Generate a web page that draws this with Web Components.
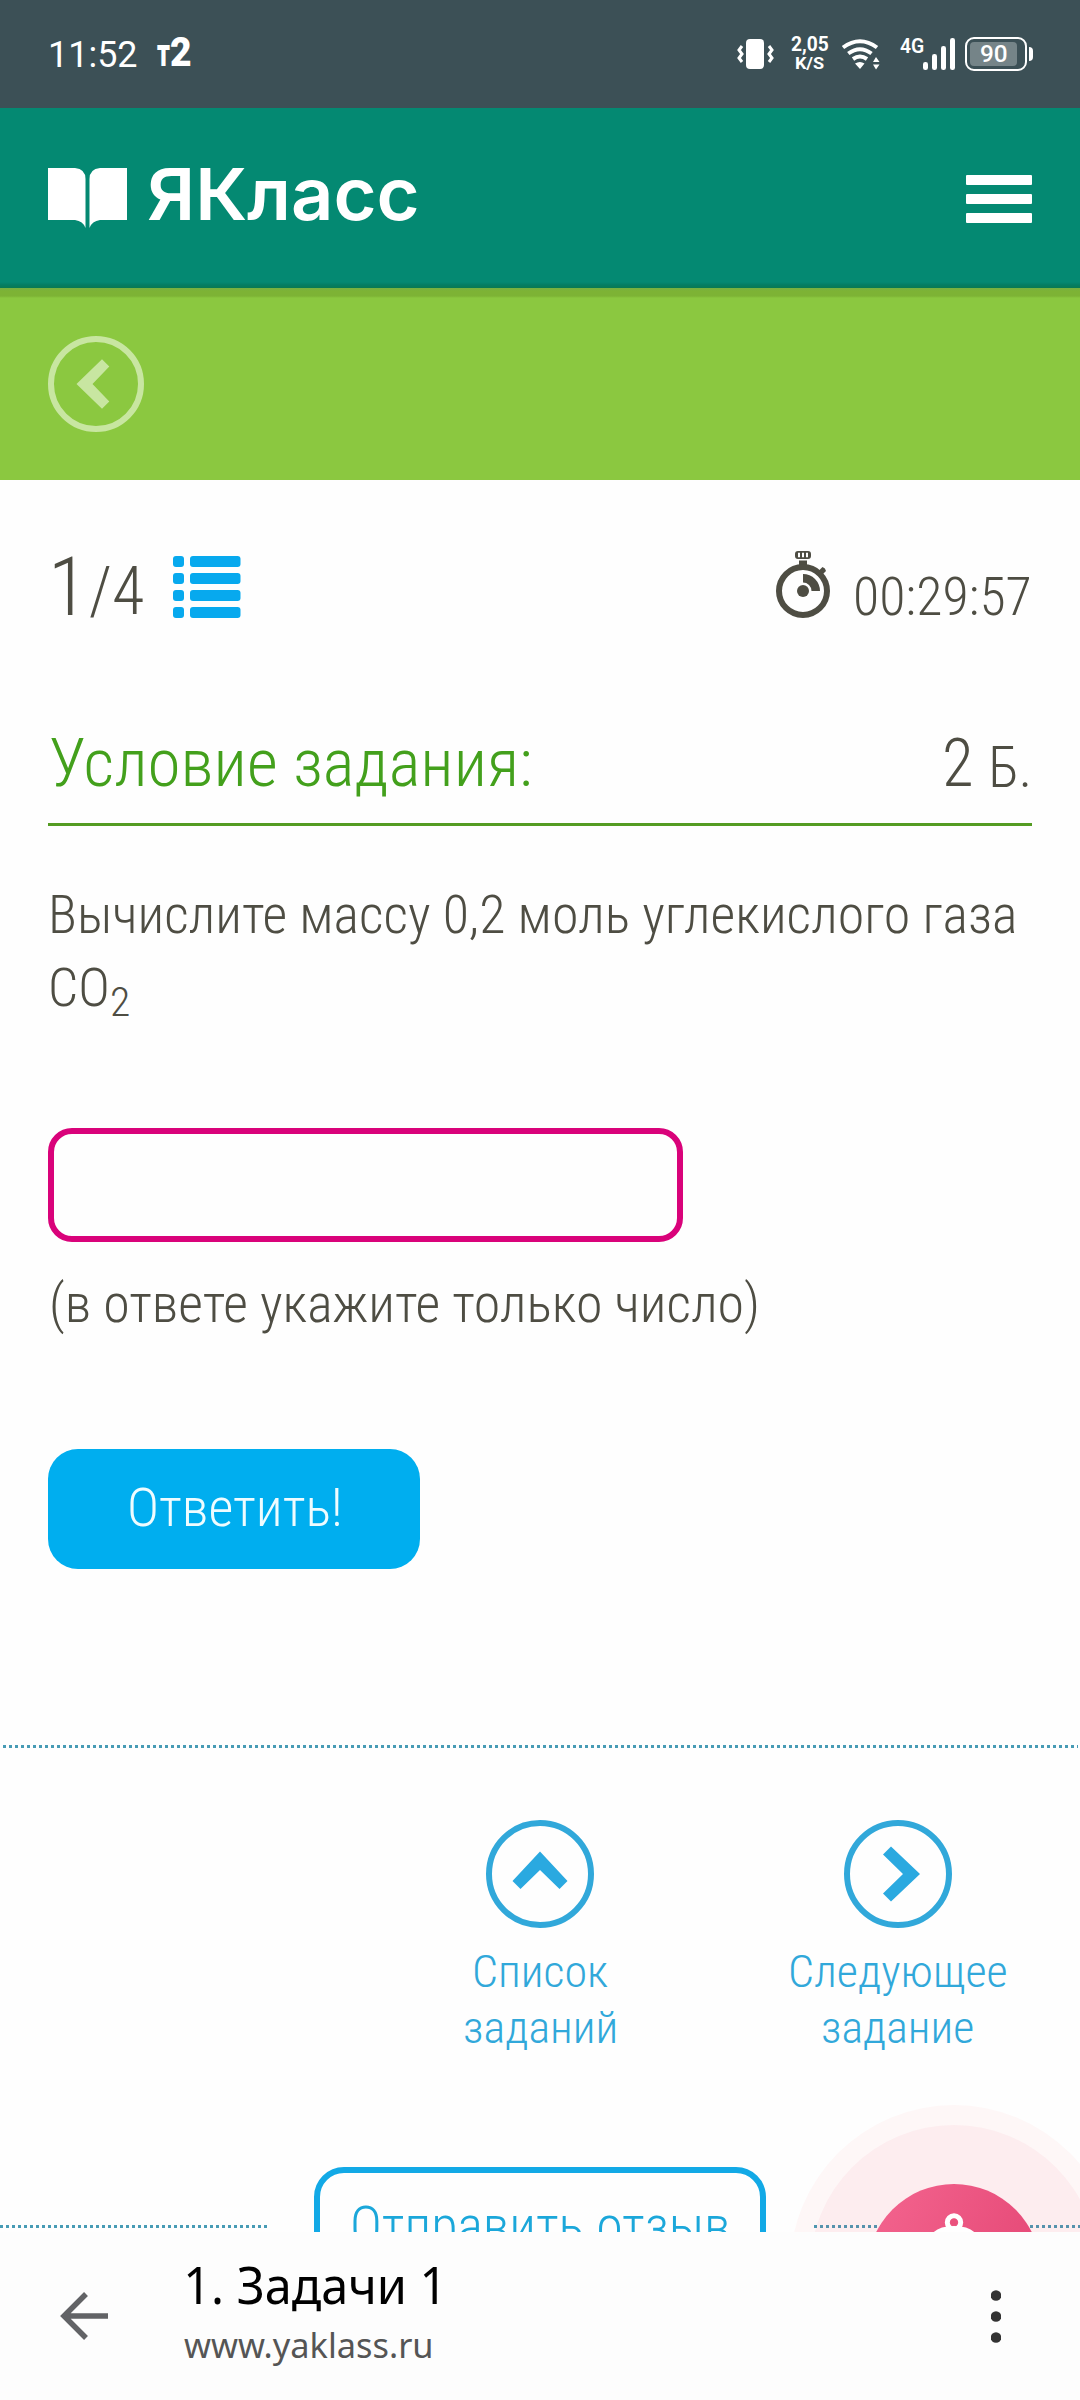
<!DOCTYPE html>
<html lang="ru">
<head>
<meta charset="utf-8">
<title>ЯКласс</title>
<style>
html,body{margin:0;padding:0;background:#fefefe}
body{width:1080px;height:2400px;overflow:hidden}
</style>
</head>
<body>
<yk-app></yk-app>
<script>
const CONDENSED = '"Roboto Condensed", Roboto, "Liberation Sans", sans-serif';
const pen = document.createElement('canvas').getContext('2d');

function define(name, css, html) {
  customElements.define(name, class extends HTMLElement {
    constructor() {
      super();
      this.attachShadow({ mode: 'open' }).innerHTML =
        `<style>:host{display:block;box-sizing:border-box}svg{display:block}${css}</style>${html}`;
    }
  });
}

/* One line of text whose box is its ink: w wide, cap tall, baseline on the bottom edge. */
customElements.define('fit-text', class extends HTMLElement {
  constructor() {
    super();
    this.attachShadow({ mode: 'open' }).innerHTML =
      '<style>:host{display:block;flex:none}span{display:block;width:max-content;white-space:pre;transform-origin:0 0}</style><span><slot></slot></span>';
  }
  connectedCallback() {
    const num = (k, d) => parseFloat(this.getAttribute(k) || d);
    const size = num('size', 54), w = num('w', 100), cap = num('cap', size * 0.711);
    const weight = this.getAttribute('weight') || '300';
    const own = this.getAttribute('font');
    const font = `${weight} ${own ? '' : 'condensed '}${size}px ${own || CONDENSED}`;
    pen.font = font;
    const m = pen.measureText(this.textContent);
    const k = w / (m.actualBoundingBoxRight + m.actualBoundingBoxLeft);
    const base = cap / 2 + (m.fontBoundingBoxAscent - m.fontBoundingBoxDescent) / 2;
    this.style.width = w + 'px';
    this.style.height = cap + 'px';
    const s = this.shadowRoot.querySelector('span').style;
    s.font = font;
    s.lineHeight = cap + 'px';
    s.transform = `translate(${m.actualBoundingBoxLeft * k}px,${cap - base}px) scaleX(${k})`;
  }
});

define('status-bar', `
:host{height:108px;background:#3c5056;color:#fff;display:flex;align-items:flex-start;padding-left:51px}
.time{margin-top:42px}.op{display:flex;margin-left:20px}.op .t{margin-top:46px}.op .n{margin:38px 0 0 1px}
.vib{margin:39px 0 0 546px}.net{margin:37px 0 0 17px;display:flex;flex-direction:column;align-items:center;gap:6px}
.wifi{margin:38px 0 0 13px}.g{margin:39px 0 0 20px}.sig{margin:38px 0 0 -1px}
.bat{margin:37px 0 0 9px;width:62px;height:34px;box-sizing:border-box;border:2.5px solid #fff;border-radius:9px;padding:3px;display:flex}
.fill{width:47px;background:#758488;border-radius:4px;display:flex;justify-content:center;align-items:center}
.tip{width:4px;height:14px;background:#fff;border-radius:0 5px 5px 0;margin:47px 0 0 2px}
`, `
<fit-text class="time" size="36.5" weight="400" w="86" font="Roboto, sans-serif">11:52</fit-text>
<div class="op"><fit-text class="t" size="38" cap="20.5" weight="900" w="13" font="Roboto, sans-serif">т</fit-text><fit-text class="n" size="41" cap="28.5" weight="900" w="20" font="Roboto, sans-serif">2</fit-text></div>
<svg class="vib" width="37" height="30" viewBox="0 0 37 30"><rect x="9" y="0" width="18" height="30" rx="4" fill="#fff"/><path d="M5 7l-3 4 3 4-3 4 3 4M32 7l3 4-3 4 3 4-3 4" fill="none" stroke="#fff" stroke-width="3"/></svg>
<div class="net"><fit-text size="20.5" weight="700" w="37" font="Roboto, sans-serif">2,05</fit-text><fit-text size="16.5" weight="700" w="28" font="Roboto, sans-serif">K/S</fit-text></div>
<svg class="wifi" width="39" height="33" viewBox="0 0 39 33"><path d="M2 9.5Q19 -3 36 9.5M7.300 15.500Q19 7 30.500 15.500M12 21Q19 16 26 21" fill="none" stroke="#fff" stroke-width="4"/><path d="M14 25.500Q19 22.500 23.500 25.500L19 31ZM32 24l3-5 3.500 5zM32 26.500h6.500l-3.500 5z" fill="#fff"/></svg>
<fit-text class="g" size="21" weight="600" w="24" font="Roboto, sans-serif">4G</fit-text>
<svg class="sig" width="33" height="32" viewBox="0 0 33 32"><g fill="#fff"><rect y="24" width="5" height="8" rx="2.300"/><rect x="9" y="16" width="5" height="16" rx="2.300"/><rect x="18" y="8" width="5" height="24" rx="2.300"/><rect x="27" width="5" height="32" rx="2.300"/></g></svg>
<div class="bat"><div class="fill"><fit-text size="24" weight="500" w="26" font="Roboto, sans-serif">90</fit-text></div></div><div class="tip"></div>
`);

define('site-header', `
:host{height:180px;color:#fff;background:linear-gradient(#048972 0 174px,#047d62 177px,#087a52 180px);display:flex;justify-content:space-between;padding:60px 48px 0}
.logo{display:flex;gap:21px;align-items:flex-start}.menu{margin-top:7px}
`, `
<div class="logo"><svg width="79" height="61" viewBox="0 0 79 61"><path fill="#fff" d="M0 0H27Q37.500 1 37.500 11V60Q35 53 27 52H0ZM79 0H52Q41.500 1 41.500 11V60Q44 53 52 52H79Z"/></svg>
<fit-text size="72" cap="52" weight="600" w="268.500" font="Inter, sans-serif">ЯКласс</fit-text></div>
<svg class="menu" width="66" height="48" viewBox="0 0 66 48"><g fill="#fff"><rect width="66" height="10" rx="1"/><rect y="19" width="66" height="10" rx="1"/><rect y="38" width="66" height="10" rx="1"/></g></svg>
`);

define('back-strip', `
:host{height:192px;background:linear-gradient(#76b043 0,#7db335 3px 8px,#8bc840 10px);padding:48px}
`, `<svg width="96" height="96" viewBox="0 0 96 96"><circle cx="48" cy="48" r="45" fill="none" stroke="#c8e6a1" stroke-width="6"/><path d="M28.500 48L54 23.300 61.300 30.500 44.500 48 61.300 65.500 54 72.700Z" fill="#c8e6a1"/></svg>`);

define('task-progress', `
:host{display:flex;justify-content:space-between;height:138px}
.l,.r{display:flex;align-items:flex-start}
.one{margin:0 0 0 6px}.sl{margin:10px 0 0 17px}.four{margin:10px 0 0 4px}.list{margin:-1px 0 0 29.5px}
.r{margin-top:-6px}.r fit-text{margin:26px 2.5px 0 26px}
`, `
<div class="l"><fit-text class="one" size="82" w="19">1</fit-text><fit-text class="sl" size="67.500" w="20">/</fit-text><fit-text class="four" size="67.500" w="29.500">4</fit-text>
<svg class="list" width="68" height="62" viewBox="0 0 68 62"><g fill="#07a9ee"><rect width="11" height="11" rx="3"/><rect x="17" width="50.500" height="11" rx="3"/><rect y="17" width="11" height="11" rx="3"/><rect x="17" y="17" width="50.500" height="11" rx="3"/><rect y="34" width="11" height="11" rx="3"/><rect x="17" y="34" width="50.500" height="11" rx="3"/><rect y="51" width="11" height="11" rx="3"/><rect x="17" y="51" width="50.500" height="11" rx="3"/></g></svg></div>
<div class="r"><svg width="54" height="67" viewBox="0 0 54 67"><g fill="#4e4d43"><path fill-rule="evenodd" d="M22 0h10q3 0 3 3v2q0 3-3 3H22q-3 0-3-3V3q0-3 3-3zM22 1.700v4.600h2V1.700zM26 1.700v4.600h2V1.700zM30 1.700v4.600h2V1.700z"/><path d="M23 9.500h8v6h-8zM42.500 20l4-4q3 1 3.500 4l-4 4z"/><circle cx="27" cy="40" r="6"/><path d="M27 23A17 17 0 0 1 44 40H35.500A8.500 8.500 0 0 0 27 31.500Z"/></g><circle cx="27" cy="40" r="24" fill="none" stroke="#4e4d43" stroke-width="6"/></svg>
<fit-text size="54" w="173.500">00:29:57</fit-text></div>
`);

define('task-heading', `
:host{display:flex;justify-content:space-between;height:131px;border-bottom:3px solid #549c22;padding:44px 5px 0 3px}
.t{color:#43a01c}.p{display:flex;gap:20.5px}.p .b{margin-top:6.5px}
`, `<fit-text class="t" size="67.500" w="479">Условие задания:</fit-text>
<div class="p"><fit-text size="67.500" w="26">2</fit-text><fit-text class="b" size="58" w="35.500">Б.</fit-text></div>`);

define('task-body', `
:host{padding:69px 0 0 0;display:flex;flex-direction:column;align-items:flex-start}
.a{margin-left:4px}.f{display:flex;margin:35px 0 0 3px;align-items:flex-start}.f .s{margin:20px 0 0 5px}
.in{box-sizing:border-box;width:635px;height:114px;border:6px solid #d9027a;border-radius:24px;margin-top:111px}
.n{margin:42px 0 0 4px}
.btn{width:372px;height:120px;border-radius:30px;background:#00aeef;color:#effcff;margin-top:126px;display:flex;justify-content:center;padding-top:39px;box-sizing:border-box}
`, `
<fit-text class="a" size="54" w="963">Вычислите массу 0,2 моль углекислого газа</fit-text>
<div class="f"><fit-text size="54" w="56">CO</fit-text><fit-text class="s" size="40.500" w="16.500">2</fit-text></div>
<div class="in"></div>
<fit-text class="n" size="54" w="705">(в ответе укажите только число)</fit-text>
<div class="btn"><fit-text size="54" w="209">Ответить!</fit-text></div>
`);

define('dotted-line', `
:host{height:3px;background:repeating-linear-gradient(90deg,#479bb5 0 3px,transparent 3px 6px)}
`, ``);

define('nav-link', `
:host{display:flex;flex-direction:column;align-items:center;color:#31a8da;width:216px}
::slotted(svg){display:block;margin-bottom:27.5px}
::slotted(fit-text){margin-bottom:25px}
`, `<slot></slot>`);

define('feedback-button', `
:host{width:452px;height:120px;border:6.5px solid #12a9e6;border-radius:30px;color:#1ba7da;display:flex;justify-content:center;padding-top:33px}
`, `<fit-text size="54" w="375">Отправить отзыв</fit-text>`);

define('page-footer', `
.nav{display:flex;gap:142px;padding:72px 0 0 432px;height:347px;box-sizing:border-box}
.row{display:grid;height:137px;position:relative;overflow:hidden;grid-template-columns:314px 452px 314px}
feedback-button{margin-top:72px}
.first{margin-left:1.5px}
.l{width:267px;margin-top:130px}.r{width:266px;margin:130px 0 0 48px}
.bell{position:absolute;left:789px;top:10px}
`, `
<dotted-line style="margin:0 0 0 3px;width:1075px"></dotted-line>
<div class="nav">
<nav-link><svg width="108" height="108" viewBox="0 0 108 108"><circle cx="54" cy="54" r="51" fill="none" stroke="#31a8da" stroke-width="6"/><path fill="#2aa9e0" d="M54 31.500L81.500 61 73.500 69 54 50 34.500 69 26.500 61Z"/></svg><fit-text class="first" size="45" w="132.500">Список</fit-text><fit-text size="45" w="150">заданий</fit-text></nav-link>
<nav-link><svg width="108" height="108" viewBox="0 0 108 108"><circle cx="54" cy="54" r="51" fill="none" stroke="#31a8da" stroke-width="6"/><path fill="#2aa9e0" d="M76 54L47 26.500 39 34.500 59 54 39 73.500 47 81.500Z"/></svg><fit-text class="first" size="45" w="215">Следующее</fit-text><fit-text size="45" w="149.500">задание</fit-text></nav-link>
</div>
<div class="row"><dotted-line class="l"></dotted-line><feedback-button></feedback-button><dotted-line class="r"></dotted-line>
<svg class="bell" width="291" height="127" viewBox="789 2105 291 127"><defs><linearGradient id="p" x1="0" x2="1" y1="0" y2=".5"><stop stop-color="#f4658f"/><stop offset="1" stop-color="#e54876"/></linearGradient></defs>
<circle cx="954" cy="2269" r="164" fill="#f44336" fill-opacity=".035"/><circle cx="954" cy="2269" r="144" fill="#f0406a" fill-opacity=".05"/>
<circle cx="954" cy="2271" r="87" fill="url(#p)"/><circle cx="954" cy="2222.500" r="6.700" fill="none" stroke="#fff" stroke-width="5"/><path d="M932 2234Q938 2226 954 2226T976 2234Z" fill="#fff"/><circle cx="954" cy="2222" r="3.300" fill="#ea517d"/></svg></div>
`);

define('browser-bar', `
:host{height:168px;background:#fdfdfd;display:flex;align-items:flex-start;padding:35px 79px 0 60px}
.ar{margin-top:24px}.t{margin-left:76px;flex:1}.u{color:#555;margin:29px 0 0 0}.t fit-text:first-child{color:#000;margin-left:3px}
.m{margin-top:23px}
`, `
<svg class="ar" width="48" height="50" viewBox="0 0 48 50"><path d="M48 25H5M26 3L4 25 26 47" fill="none" stroke="#626366" stroke-width="5.500"/></svg>
<div class="t"><fit-text size="51.500" cap="37" weight="400" w="250.500" font="'Noto Sans', sans-serif">1. Задачи 1</fit-text><fit-text class="u" size="35" cap="25" weight="400" w="247" font="'Noto Sans', sans-serif">www.yaklass.ru</fit-text></div>
<svg class="m" width="10" height="53" viewBox="0 0 10 53"><g fill="#333"><circle cx="5" cy="5.500" r="5.300"/><circle cx="5" cy="26.500" r="5.300"/><circle cx="5" cy="47.500" r="5.300"/></g></svg>
`);

define('yk-app', `
:host{width:1080px;height:2400px;background:#fefefe;color:#4e4d43;display:flex;flex-direction:column;overflow:hidden}
main{padding:77px 48px 0;height:1265px;box-sizing:border-box}
page-footer{height:487px}
`, `<status-bar></status-bar><site-header></site-header><back-strip></back-strip>
<main><task-progress></task-progress><task-heading></task-heading><task-body></task-body></main>
<page-footer></page-footer><browser-bar></browser-bar>`);
</script>
</body>
</html>
